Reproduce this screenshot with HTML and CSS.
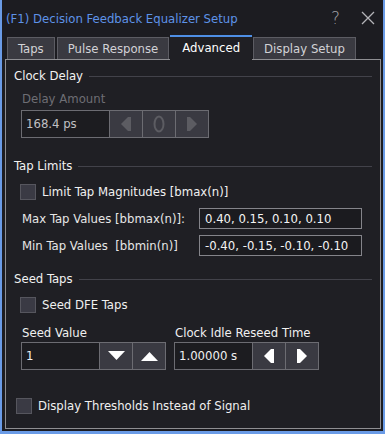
FILE: index.html
```html
<!DOCTYPE html>
<html>
	<head>
		<title>(F1) Decision Feedback Equalizer Setup</title>
		<meta name="viewport" content="width=device-width, initial-scale=1" />
		<link rel="stylesheet" href="styles.css">
	</head>
	<body>
		<div class="window">
			<div class="titlebar">
				<span class="title">(F1) Decision Feedback Equalizer Setup</span>
				<span class="help">?</span>
				<svg class="close" width="14" height="14" viewBox="0 0 14 14">
					<path d="M1 1 L13 13 M13 1 L1 13" stroke="#b4b4b8" stroke-width="1.3" fill="none" />
				</svg>
			</div>

			<div class="tabs">
				<div class="tab">Taps</div>
				<div class="tab">Pulse Response</div>
				<div class="tab active">Advanced</div>
				<div class="tab">Display Setup</div>
			</div>

			<div class="panel">
				<div class="group">
					<div class="group-head">Clock Delay</div>
					<div class="field-label dim">Delay Amount</div>
					<div class="spin disabled spin-delay">
						<div class="spin-text">168.4 ps</div>
						<div class="spin-btn">
							<svg width="10" height="16" viewBox="0 0 10 16"><polygon points="0,8 7,1 10,1 10,15 7,15" fill="#5c5c62" /></svg>
						</div>
						<div class="spin-btn">
							<svg width="12" height="18" viewBox="0 0 12 18"><ellipse cx="6" cy="9" rx="4.5" ry="7.5" stroke="#5c5c62" stroke-width="2" fill="none" /></svg>
						</div>
						<div class="spin-btn">
							<svg width="10" height="16" viewBox="0 0 10 16"><polygon points="10,8 3,1 0,1 0,15 3,15" fill="#5c5c62" /></svg>
						</div>
					</div>
				</div>

				<div class="group group-limits">
					<div class="group-head">Tap Limits</div>
					<label class="check"><span class="box"></span>Limit Tap Magnitudes [bmax(n)]</label>
					<div class="row">
						<span class="row-label">Max Tap Values [bbmax(n)]:</span>
						<div class="text-box">0.40, 0.15, 0.10, 0.10</div>
					</div>
					<div class="row">
						<span class="row-label">Min Tap Values&nbsp; [bbmin(n)]</span>
						<div class="text-box">-0.40, -0.15, -0.10, -0.10</div>
					</div>
				</div>

				<div class="group">
					<div class="group-head">Seed Taps</div>
					<label class="check"><span class="box"></span>Seed DFE Taps</label>
					<div class="seed-row">
						<div>
							<div class="field-label">Seed Value</div>
							<div class="spin spin-seed">
								<div class="spin-text">1</div>
								<div class="spin-btn">
									<svg width="17" height="10" viewBox="0 0 17 10"><polygon points="0,0 17,0 8.5,9" fill="#ffffff" /></svg>
								</div>
								<div class="spin-btn">
									<svg width="17" height="10" viewBox="0 0 17 10"><polygon points="0,10 17,10 8.5,1" fill="#ffffff" /></svg>
								</div>
							</div>
						</div>
						<div>
							<div class="field-label">Clock Idle Reseed Time</div>
							<div class="spin spin-seed">
								<div class="spin-text">1.00000 s</div>
								<div class="spin-btn">
									<svg width="10" height="16" viewBox="0 0 10 16"><polygon points="0,8 7,1 10,1 10,15 7,15" fill="#ffffff" /></svg>
								</div>
								<div class="spin-btn">
									<svg width="10" height="16" viewBox="0 0 10 16"><polygon points="10,8 3,1 0,1 0,15 3,15" fill="#ffffff" /></svg>
								</div>
							</div>
						</div>
					</div>
				</div>

				<label class="check check-bottom"><span class="box"></span>Display Thresholds Instead of Signal</label>
			</div>
		</div>
	</body>
</html>
```

FILE: styles.css
```css
body {
	margin: 0;
	background-color: #1c1c21;
	font-family: "DejaVu Sans Condensed", "DejaVu Sans", sans-serif;
	font-stretch: condensed;
	font-size: 13px;
	color: #e6e6e6;
}
.window {
	width: 385px;
	height: 434px;
	box-sizing: border-box;
	border: 2px solid #6a9be6;
	border-top: none;
	border-bottom-width: 3px;
	display: flex;
	flex-direction: column;
	background-color: #1c1c21;
}
.titlebar {
	height: 35px;
	display: flex;
	align-items: center;
	padding: 0 8px 0 4px;
	flex-shrink: 0;
}
.title {
	color: #5e93e8;
	flex: 1;
	padding-top: 1px;
}
.help {
	color: #a0a0a6;
	font-size: 17px;
	font-family: "DejaVu Sans", sans-serif;
	font-weight: 200;
	margin-right: 21px;
}
.close {
	display: block;
}
.tabs {
	height: 24px;
	display: flex;
	align-items: flex-end;
	gap: 2px;
	padding-left: 5px;
	flex-shrink: 0;
	position: relative;
	z-index: 1;
}
.tab {
	height: 22px;
	box-sizing: border-box;
	padding: 0 10px;
	line-height: 21px;
	border: 1px solid #5c5c63;
	border-bottom: none;
	background-color: #3a3a41;
	color: #d2d2d6;
}
.tab.active {
	height: 25px;
	margin: 0 -1px -1px;
	padding: 0 12px;
	line-height: 22px;
	border: none;
	border-top: 2px solid #4e8fe6;
	background-color: #1f1f24;
	color: #ffffff;
}
.panel {
	flex: 1;
	margin: 0 2px 2px 3px;
	border: 1px solid #8e8e92;
	background-color: #1f1f24;
	padding: 8px 8px 0 8px;
}
.group {
	margin-bottom: 20px;
}
.group-limits {
	margin-bottom: 15px;
}
.group-head {
	display: flex;
	align-items: center;
	gap: 6px;
	line-height: 16px;
	color: #f2f2f2;
}
.group-head::after {
	content: "";
	flex: 1;
	height: 1px;
	background-color: #42424a;
}
.field-label {
	line-height: 16px;
	margin: 12px 0 1px 1px;
	color: #f0f0f0;
}
.field-label.dim {
	margin: 7px 0 3px 8px;
	color: #6e6e74;
}
.spin {
	display: flex;
	height: 28px;
	border: 1px solid #6c6c72;
	box-sizing: border-box;
}
.spin-delay {
	width: 188px;
	margin-left: 7px;
}
.spin-seed {
	width: 145px;
}
.spin-text {
	flex: 1;
	padding-left: 4px;
	line-height: 26px;
	background-color: #1c1c20;
	color: #f0f0f0;
}
.spin.disabled .spin-text {
	color: #c0c0c4;
}
.spin-btn {
	width: 32px;
	border-left: 1px solid #6c6c72;
	background-color: #3a3a42;
	display: flex;
	align-items: center;
	justify-content: center;
}
.check {
	display: flex;
	align-items: center;
	gap: 6px;
	margin: 10px 0 0 6px;
	line-height: 16px;
	color: #f0f0f0;
}
.box {
	width: 14px;
	height: 14px;
	border: 1px solid #56565e;
	background-color: #3a3a44;
}
.row {
	display: flex;
	align-items: center;
	justify-content: space-between;
	margin: 8px 10px 0 8px;
}
.row + .row {
	margin-top: 6px;
}
.text-box {
	width: 163px;
	height: 21px;
	box-sizing: border-box;
	border: 1px solid #84848a;
	background-color: #1b1b1f;
	padding-left: 5px;
	line-height: 19px;
	white-space: nowrap;
	overflow: hidden;
	color: #f4f4f4;
}
.seed-row {
	display: flex;
	gap: 8px;
	padding-left: 7px;
}
.check-bottom {
	margin: 28px 0 0 2px;
}
```
